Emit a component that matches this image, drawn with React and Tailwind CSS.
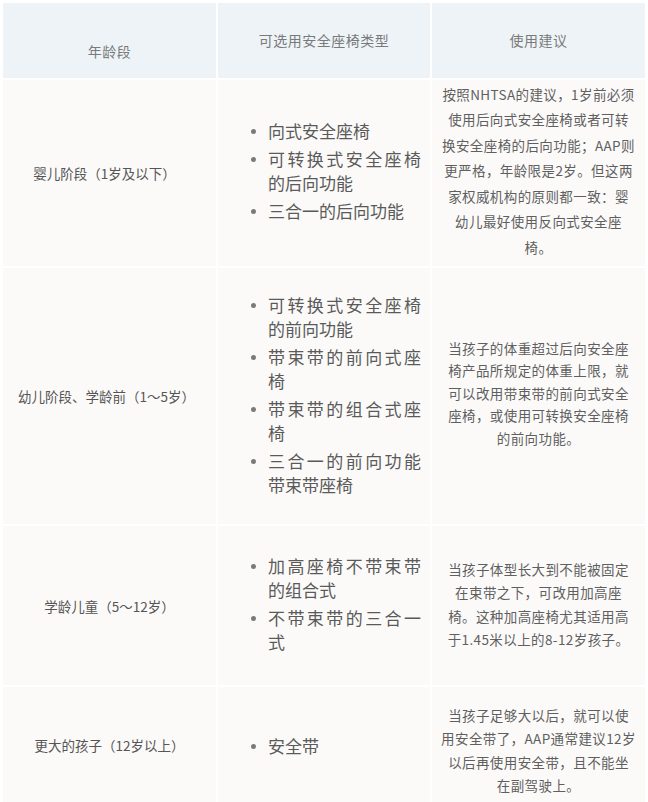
import React from "react";

const F = { fontFamily: '"Noto Sans CJK SC", "Noto Sans", sans-serif' };

function Item({ lines }) {
  return (
    <div className="flex">
      <div className="w-[17px] shrink-0 flex items-start pt-[10px]">
        <span className="block w-[5px] h-[5px] rounded-full bg-[#7a7a7a]" />
      </div>
      <div className="w-[153px]">
        {lines.map((l, i) =>
          i < lines.length - 1 ? (
            <div key={i} className="text-justify [text-align-last:justify]">{l}</div>
          ) : (
            <div key={i}>{l}</div>
          )
        )}
      </div>
    </div>
  );
}

function Types({ items, gap }) {
  return (
    <div className={`flex flex-col ${gap} text-[17px] leading-[24px] text-[#5a5a5a] pl-[33px]`}>
      {items.map((it, i) => (
        <Item key={i} lines={it} />
      ))}
    </div>
  );
}

function Advice({ lines, lh }) {
  return (
    <div className={`text-center text-[13.5px] ${lh} text-[#5f5f5f] tracking-[0.4px]`}>
      {lines.map((l, i) => (
        <div key={i} className="whitespace-nowrap">{l}</div>
      ))}
    </div>
  );
}

export default function App() {
  const cellB = "bg-[#fbfaf9] flex items-center";
  return (
    <div className="w-[648px] h-[802px] overflow-hidden bg-white" style={F}>
      <div className="grid grid-cols-[213px_212px_213px] grid-rows-[75px_186px_256px_159px_130px] gap-[2px] pt-[3px] pl-[3px]">
        <div className="bg-[#eef3f7] flex items-center justify-center pt-[22px] text-[14px] text-[#7a7a7a] tracking-[0.5px]">年龄段</div>
        <div className="bg-[#eef3f7] flex items-center justify-center text-[14px] text-[#7a7a7a] tracking-[0.5px]">可选用安全座椅类型</div>
        <div className="bg-[#eef3f7] flex items-center justify-center text-[14px] text-[#7a7a7a] tracking-[0.5px]">使用建议</div>

        <div className={`${cellB} justify-center text-[13.5px] text-[#555] pr-[10px]`}>婴儿阶段（1岁及以下）</div>
        <div className={`${cellB} pb-[4px]`}>
          <Types gap="gap-[4px]" items={[["向式安全座椅"], ["可转换式安全座椅", "的后向功能"], ["三合一的后向功能"]]} />
        </div>
        <div className={`${cellB} justify-center pb-[4px]`}>
          <Advice
            lh="leading-[25.5px]"
            lines={[
              "按照NHTSA的建议，1岁前必须",
              "使用后向式安全座椅或者可转",
              "换安全座椅的后向功能；AAP则",
              "更严格，年龄限是2岁。但这两",
              "家权威机构的原则都一致：婴",
              "幼儿最好使用反向式安全座",
              "椅。",
            ]}
          />
        </div>

        <div className={`${cellB} justify-center text-[13.5px] text-[#555] pr-[6px]`}>幼儿阶段、学龄前（1～5岁）</div>
        <div className={`${cellB} pb-[2px]`}>
          <Types
            gap="gap-[4px]"
            items={[
              ["可转换式安全座椅", "的前向功能"],
              ["带束带的前向式座", "椅"],
              ["带束带的组合式座", "椅"],
              ["三合一的前向功能", "带束带座椅"],
            ]}
          />
        </div>
        <div className={`${cellB} justify-center pb-[6px]`}>
          <Advice
            lh="leading-[22.5px]"
            lines={[
              "当孩子的体重超过后向安全座",
              "椅产品所规定的体重上限，就",
              "可以改用带束带的前向式安全",
              "座椅，或使用可转换安全座椅",
              "的前向功能。",
            ]}
          />
        </div>

        <div className={`${cellB} justify-center text-[13.5px] text-[#555] pt-[2px]`}>学龄儿童（5～12岁）</div>
        <div className={`${cellB} pb-[4px]`}>
          <Types gap="gap-[4px]" items={[["加高座椅不带束带", "的组合式"], ["不带束带的三合一", "式"]]} />
        </div>
        <div className={`${cellB} justify-center pb-[2px]`}>
          <Advice
            lh="leading-[23.5px]"
            lines={[
              "当孩子体型长大到不能被固定",
              "在束带之下，可改用加高座",
              "椅。这种加高座椅尤其适用高",
              "于1.45米以上的8-12岁孩子。",
            ]}
          />
        </div>

        <div className="bg-[#fbfaf9] flex items-start justify-center pt-[48px] text-[13.5px] text-[#555]">更大的孩子（12岁以上）</div>
        <div className="bg-[#fbfaf9] flex items-start pt-[47px]">
          <Types gap="gap-[4px]" items={[["安全带"]]} />
        </div>
        <div className="bg-[#fbfaf9] flex items-start justify-center pt-[17px]">
          <Advice
            lh="leading-[23.3px]"
            lines={[
              "当孩子足够大以后，就可以使",
              "用安全带了，AAP通常建议12岁",
              "以后再使用安全带，且不能坐",
              "在副驾驶上。",
            ]}
          />
        </div>
      </div>
    </div>
  );
}
